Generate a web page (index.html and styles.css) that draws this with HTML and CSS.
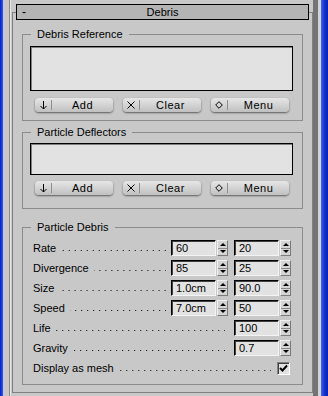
FILE: index.html
```html
<!DOCTYPE html>
<html lang="en">
<head>
    <meta charset="UTF-8">
    <title>Debris</title>
    <link rel="stylesheet" href="styles.css">
</head>
<body>
    <div class="edge-left"></div>
    <div class="track">
        <div class="rollout">
            <div class="rollout-title">
                <span class="toggle">-</span>
                <span class="title-text">Debris</span>
            </div>

            <fieldset class="group group-ref">
                <legend>Debris Reference</legend>
                <div class="listbox listbox-tall"></div>
                <div class="btn-row">
                    <button class="pill">
                        <span class="pill-icon">
                            <svg width="7" height="9" viewBox="0 0 7 9"><path d="M3.5 0v8M0.5 5l3 3 3-3" fill="none" stroke="#000" stroke-width="1"/></svg>
                        </span>
                        <span class="pill-text">Add</span>
                    </button>
                    <button class="pill">
                        <span class="pill-icon">
                            <svg width="8" height="8" viewBox="0 0 8 8"><path d="M0.5 0.5l7 7M7.5 0.5l-7 7" fill="none" stroke="#000" stroke-width="1"/></svg>
                        </span>
                        <span class="pill-text">Clear</span>
                    </button>
                    <button class="pill">
                        <span class="pill-icon">
                            <svg width="8" height="8" viewBox="0 0 8 8"><path d="M4 0.7L7.3 4 4 7.3 0.7 4z" fill="none" stroke="#000" stroke-width="1"/></svg>
                        </span>
                        <span class="pill-text">Menu</span>
                    </button>
                </div>
            </fieldset>

            <fieldset class="group group-defl">
                <legend>Particle Deflectors</legend>
                <div class="listbox listbox-short"></div>
                <div class="btn-row">
                    <button class="pill">
                        <span class="pill-icon">
                            <svg width="7" height="9" viewBox="0 0 7 9"><path d="M3.5 0v8M0.5 5l3 3 3-3" fill="none" stroke="#000" stroke-width="1"/></svg>
                        </span>
                        <span class="pill-text">Add</span>
                    </button>
                    <button class="pill">
                        <span class="pill-icon">
                            <svg width="8" height="8" viewBox="0 0 8 8"><path d="M0.5 0.5l7 7M7.5 0.5l-7 7" fill="none" stroke="#000" stroke-width="1"/></svg>
                        </span>
                        <span class="pill-text">Clear</span>
                    </button>
                    <button class="pill">
                        <span class="pill-icon">
                            <svg width="8" height="8" viewBox="0 0 8 8"><path d="M4 0.7L7.3 4 4 7.3 0.7 4z" fill="none" stroke="#000" stroke-width="1"/></svg>
                        </span>
                        <span class="pill-text">Menu</span>
                    </button>
                </div>
            </fieldset>

            <fieldset class="group group-debris">
                <legend>Particle Debris</legend>
                <div class="rows">
                    <div class="row">
                        <span class="label">Rate</span>
                        <span class="leader"></span>
                        <div class="field"><span class="num">60</span><span class="spin"><span class="up"></span><span class="down"></span></span></div>
                        <div class="field"><span class="num">20</span><span class="spin"><span class="up"></span><span class="down"></span></span></div>
                    </div>
                    <div class="row">
                        <span class="label">Divergence</span>
                        <span class="leader"></span>
                        <div class="field"><span class="num">85</span><span class="spin"><span class="up"></span><span class="down"></span></span></div>
                        <div class="field"><span class="num">25</span><span class="spin"><span class="up"></span><span class="down"></span></span></div>
                    </div>
                    <div class="row">
                        <span class="label">Size</span>
                        <span class="leader"></span>
                        <div class="field"><span class="num">1.0cm</span><span class="spin"><span class="up"></span><span class="down"></span></span></div>
                        <div class="field"><span class="num">90.0</span><span class="spin"><span class="up"></span><span class="down"></span></span></div>
                    </div>
                    <div class="row">
                        <span class="label">Speed</span>
                        <span class="leader"></span>
                        <div class="field"><span class="num">7.0cm</span><span class="spin"><span class="up"></span><span class="down"></span></span></div>
                        <div class="field"><span class="num">50</span><span class="spin"><span class="up"></span><span class="down"></span></span></div>
                    </div>
                    <div class="row">
                        <span class="label">Life</span>
                        <span class="leader leader-short"></span>
                        <div class="field"><span class="num">100</span><span class="spin"><span class="up"></span><span class="down"></span></span></div>
                    </div>
                    <div class="row">
                        <span class="label">Gravity</span>
                        <span class="leader leader-short"></span>
                        <div class="field"><span class="num">0.7</span><span class="spin"><span class="up"></span><span class="down"></span></span></div>
                    </div>
                    <div class="row">
                        <span class="label">Display as mesh</span>
                        <span class="leader leader-check"></span>
                        <span class="check">
                            <svg width="9" height="9" viewBox="0 0 9 9"><path d="M1 4l2.5 2.5L8 1.5" fill="none" stroke="#000" stroke-width="2"/></svg>
                        </span>
                    </div>
                </div>
            </fieldset>
        </div>
    </div>
    <div class="scroll"></div>
    <div class="scroll-edge"></div>
    <div class="edge-right"></div>
</body>
</html>
```

FILE: styles.css
```css
* {
    margin: 0;
    padding: 0;
    box-sizing: border-box;
}

body {
    width: 328px;
    height: 396px;
    overflow: hidden;
    display: flex;
    background: #c8c8c8;
    font-family: "Liberation Sans", Arial, sans-serif;
    font-size: 11px;
    color: #000;
}

/* window edges and scrollbar */
.edge-left {
    width: 3px;
    background: linear-gradient(to right, #0a1ec0, #2c5af0);
}

.track {
    flex: 1;
    margin-left: 6px;
    padding: 12px 0 0 2px;
    border-left: 1px solid #8c8c8c;
    box-shadow: inset 1px 0 0 #e6e6e6;
}

.scroll {
    width: 5px;
    background: #747474;
}

.scroll-edge {
    width: 3px;
    background: #d4d4d4;
}

.edge-right {
    width: 7px;
    background: linear-gradient(to right, #3c6cf4, #1838d8 40%, #0a1eb4);
}

/* rollout */
.rollout {
    border: 1px solid #808080;
    padding-bottom: 7px;
}

.rollout-title {
    margin: -9px 3px 0;
    height: 16px;
    border: 1px solid #000;
    background: #b4b4b4;
    display: grid;
    grid-template-columns: 1fr auto 1fr;
    align-items: center;
    padding: 0 5px;
    line-height: 14px;
}

.toggle {
    font-size: 12px;
}

/* group boxes */
.group {
    border: 1px solid #8c8c8c;
    margin: 0 9px;
    min-width: 0;
}

.group legend {
    margin-left: 8px;
    padding: 0 6px;
    line-height: 13px;
}

.group-ref {
    margin-top: 8px;
    padding-bottom: 8px;
}

.group-defl {
    margin-top: 5px;
    padding-bottom: 13px;
}

.group-debris {
    margin-top: 12px;
}

.listbox {
    margin: 5px 9px 0 7px;
    border: 1px solid #000;
    background: #e2e2e2;
    box-shadow: inset 1px 1px 0 #808080;
}

.listbox-tall {
    height: 45px;
}

.listbox-short {
    height: 32px;
    margin-top: 4px;
}

.btn-row {
    display: flex;
    gap: 10px;
    margin: 7px 0 0 12px;
}

.group-defl .btn-row {
    margin-top: 6px;
}

.pill {
    width: 78px;
    height: 14px;
    display: flex;
    align-items: center;
    border: 0;
    border-radius: 4px;
    background: linear-gradient(#e6e6e6, #c0c0c0);
    box-shadow: 0 1px 2px rgba(0, 0, 0, 0.55);
    font: inherit;
    color: #000;
}

.pill-icon {
    width: 17px;
    height: 10px;
    display: flex;
    align-items: center;
    justify-content: center;
    border-right: 1px solid #8e8e8e;
}

.pill-text {
    flex: 1;
    text-align: center;
    letter-spacing: 0.5px;
}

/* parameter rows */
.rows {
    display: flex;
    flex-direction: column;
    gap: 4px;
    padding: 6px 11px 8px 10px;
}

.row {
    display: flex;
    align-items: center;
    height: 16px;
    line-height: 16px;
}

.label {
    white-space: nowrap;
}

.leader {
    flex: 1;
    align-self: stretch;
    margin: 0 5px 0 5px;
    background: linear-gradient(to right, transparent 5px, #000 5px) right 0 top 10px / 6px 1px repeat-x;
}

.leader-short {
    margin-right: 9px;
}

.leader-check {
    margin-right: 6px;
}

.field {
    display: flex;
    gap: 1px;
}

.field + .field {
    margin-left: 6px;
}

.num {
    width: 45px;
    height: 16px;
    padding-left: 4px;
    line-height: 14px;
    border: 1px solid;
    border-color: #000 #f4f4f4 #f4f4f4 #000;
    box-shadow: inset 1px 1px 0 #404040;
    background: #e2e2e2;
}

.spin {
    width: 11px;
    height: 16px;
    display: flex;
    flex-direction: column;
    border: 1px solid;
    border-color: #f0f0f0 #7a7a7a #7a7a7a #f0f0f0;
    background: #d4d4d4;
}

.spin span {
    flex: 1;
    display: flex;
    align-items: center;
    justify-content: center;
}

.spin .down {
    border-top: 1px solid #8a8a8a;
}

.spin .up::before,
.spin .down::before {
    content: "";
    border-left: 3px solid transparent;
    border-right: 3px solid transparent;
}

.spin .up::before {
    border-bottom: 3px solid #000;
}

.spin .down::before {
    border-top: 3px solid #000;
}

.check {
    width: 13px;
    height: 13px;
    margin-right: 1px;
    display: flex;
    align-items: center;
    justify-content: center;
    border: 1px solid;
    border-color: #808080 #fff #fff #808080;
    box-shadow: inset 1px 1px 0 #404040;
    background: #e2e2e2;
}
```
